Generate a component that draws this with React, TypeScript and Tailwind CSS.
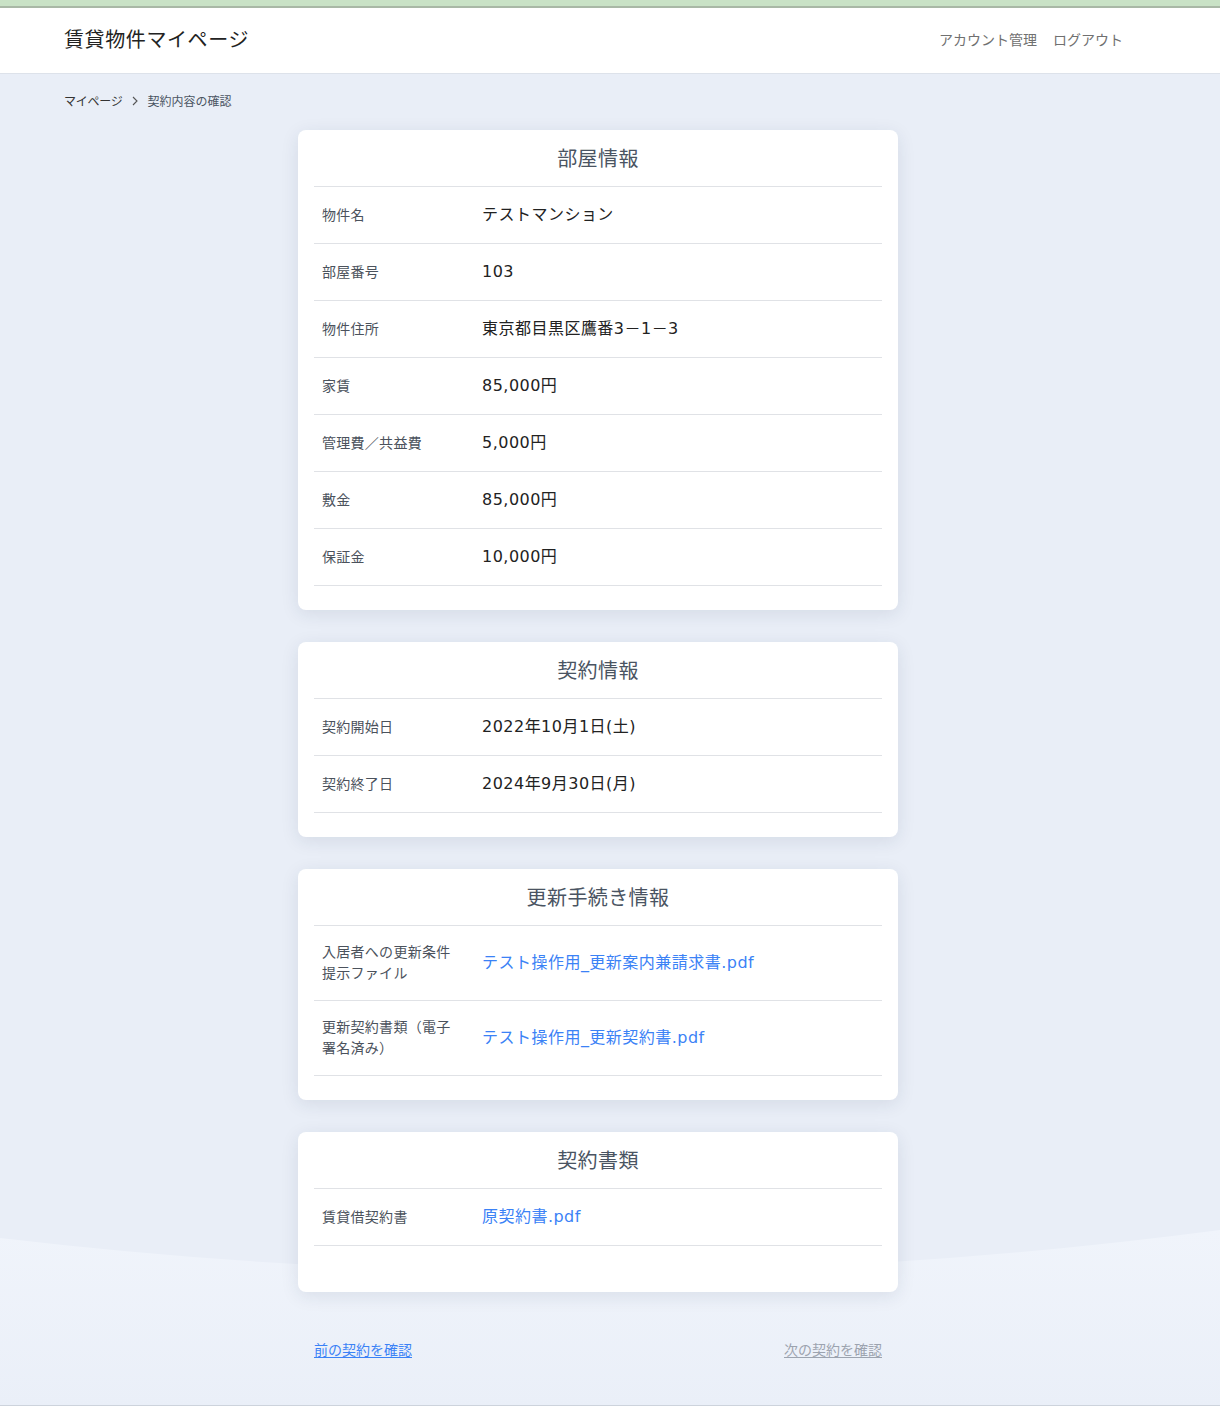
import React from "react";

type Row = { label: React.ReactNode; value: React.ReactNode; link?: boolean };

const font = { fontFamily: '"Noto Sans CJK JP", "Noto Sans", sans-serif' };
const valueFont = { fontFamily: '"DejaVu Sans", "Noto Sans CJK JP", sans-serif' };

function Card({ title, rows, extraBottom }: { title: string; rows: Row[]; extraBottom?: boolean }) {
  return (
    <section
      className={`w-[600px] rounded-[8px] bg-white px-4 shadow-[0_4px_18px_rgba(30,45,80,0.10)] ${extraBottom ? "pb-[46px]" : "pb-6"}`}
    >
      <h2 className="flex h-[57px] items-center justify-center border-b border-[#e0e2e6] text-[20px] font-normal text-[#4a5462] tracking-[0.02em]">
        {title}
      </h2>
      {rows.map((r, i) => (
        <div key={i} className="flex items-center border-b border-[#e0e2e6] px-2 py-4">
          <div className="w-[160px] shrink-0 -translate-y-px pr-[14px] text-[14px] leading-[21px] tracking-[0.02em] text-[#4b525c]">
            {r.label}
          </div>
          <div
            className={`text-[16px] leading-[24px] tracking-[0.03em] ${r.link ? "text-[#3b82f6]" : "text-[#222]"}`}
            style={valueFont}
          >
            {r.value}
          </div>
        </div>
      ))}
    </section>
  );
}

export default function App() {
  return (
    <div className="relative min-h-[1406px] w-full overflow-hidden bg-[#e9eef7]" style={font}>
      <svg
        className="pointer-events-none absolute inset-0 h-[1406px] w-full"
        viewBox="0 0 1220 1406"
        preserveAspectRatio="none"
      >
        <defs>
          <linearGradient id="lg" x1="0" y1="0" x2="0" y2="1">
            <stop offset="0" stopColor="#f0f4fb" />
            <stop offset="1" stopColor="#eaeff8" />
          </linearGradient>
        </defs>
        <path d="M0,1238 Q610,1310 1220,1230 L1220,1406 L0,1406 Z" fill="url(#lg)" />
      </svg>

      <div className="relative">
        <div className="h-[6px] bg-[#c9e2c6]" />
        <div className="h-[2px] bg-[#a9b8a6]" />
        <header className="flex h-[66px] items-center justify-between border-b border-[#dde2ea] bg-white pb-[3px] pl-[64px] pr-[97px]">
          <h1 className="text-[20px] font-normal tracking-[0.03em] text-[#222]">賃貸物件マイページ</h1>
          <nav className="flex gap-4 text-[14px] text-[#707070]">
            <span>アカウント管理</span>
            <span>ログアウト</span>
          </nav>
        </header>

        <div className="flex items-center pl-[64px] pt-[18px] text-[12px] leading-[18px]">
          <span className="tracking-[-0.02em] text-[#333]">マイページ</span>
          <svg className="ml-[8px] mr-[9px]" width="8" height="10" viewBox="0 0 8 10">
            <path d="M2 1 L6 5 L2 9" fill="none" stroke="#555" strokeWidth="1.1" />
          </svg>
          <span className="text-[#4b5563]">契約内容の確認</span>
        </div>

        <main className="flex flex-col gap-8 pl-[298px] pt-[20px]">
          <Card
            title="部屋情報"
            rows={[
              { label: "物件名", value: "テストマンション" },
              { label: "部屋番号", value: "103" },
              { label: "物件住所", value: "東京都目黒区鷹番3－1－3" },
              { label: "家賃", value: "85,000円" },
              { label: "管理費／共益費", value: "5,000円" },
              { label: "敷金", value: "85,000円" },
              { label: "保証金", value: "10,000円" },
            ]}
          />
          <Card
            title="契約情報"
            rows={[
              { label: "契約開始日", value: "2022年10月1日(土)" },
              { label: "契約終了日", value: "2024年9月30日(月)" },
            ]}
          />
          <Card
            title="更新手続き情報"
            rows={[
              {
                label: (
                  <>
                    入居者への更新条件
                    <br />
                    提示ファイル
                  </>
                ),
                value: "テスト操作用_更新案内兼請求書.pdf",
                link: true,
              },
              {
                label: (
                  <>
                    更新契約書類（電子
                    <br />
                    署名済み）
                  </>
                ),
                value: "テスト操作用_更新契約書.pdf",
                link: true,
              },
            ]}
          />
          <Card title="契約書類" rows={[{ label: "賃貸借契約書", value: "原契約書.pdf", link: true }]} extraBottom />
        </main>

        <div className="ml-[298px] flex w-[600px] justify-between px-4 pt-[47px] text-[14px] leading-[21px]">
          <span className="text-[#3b82f6] underline underline-offset-2">前の契約を確認</span>
          <span className="text-[#9ca3af] underline underline-offset-2">次の契約を確認</span>
        </div>
      </div>
      <div className="absolute bottom-0 left-0 h-px w-full bg-[#cdd3dc]" />
    </div>
  );
}
